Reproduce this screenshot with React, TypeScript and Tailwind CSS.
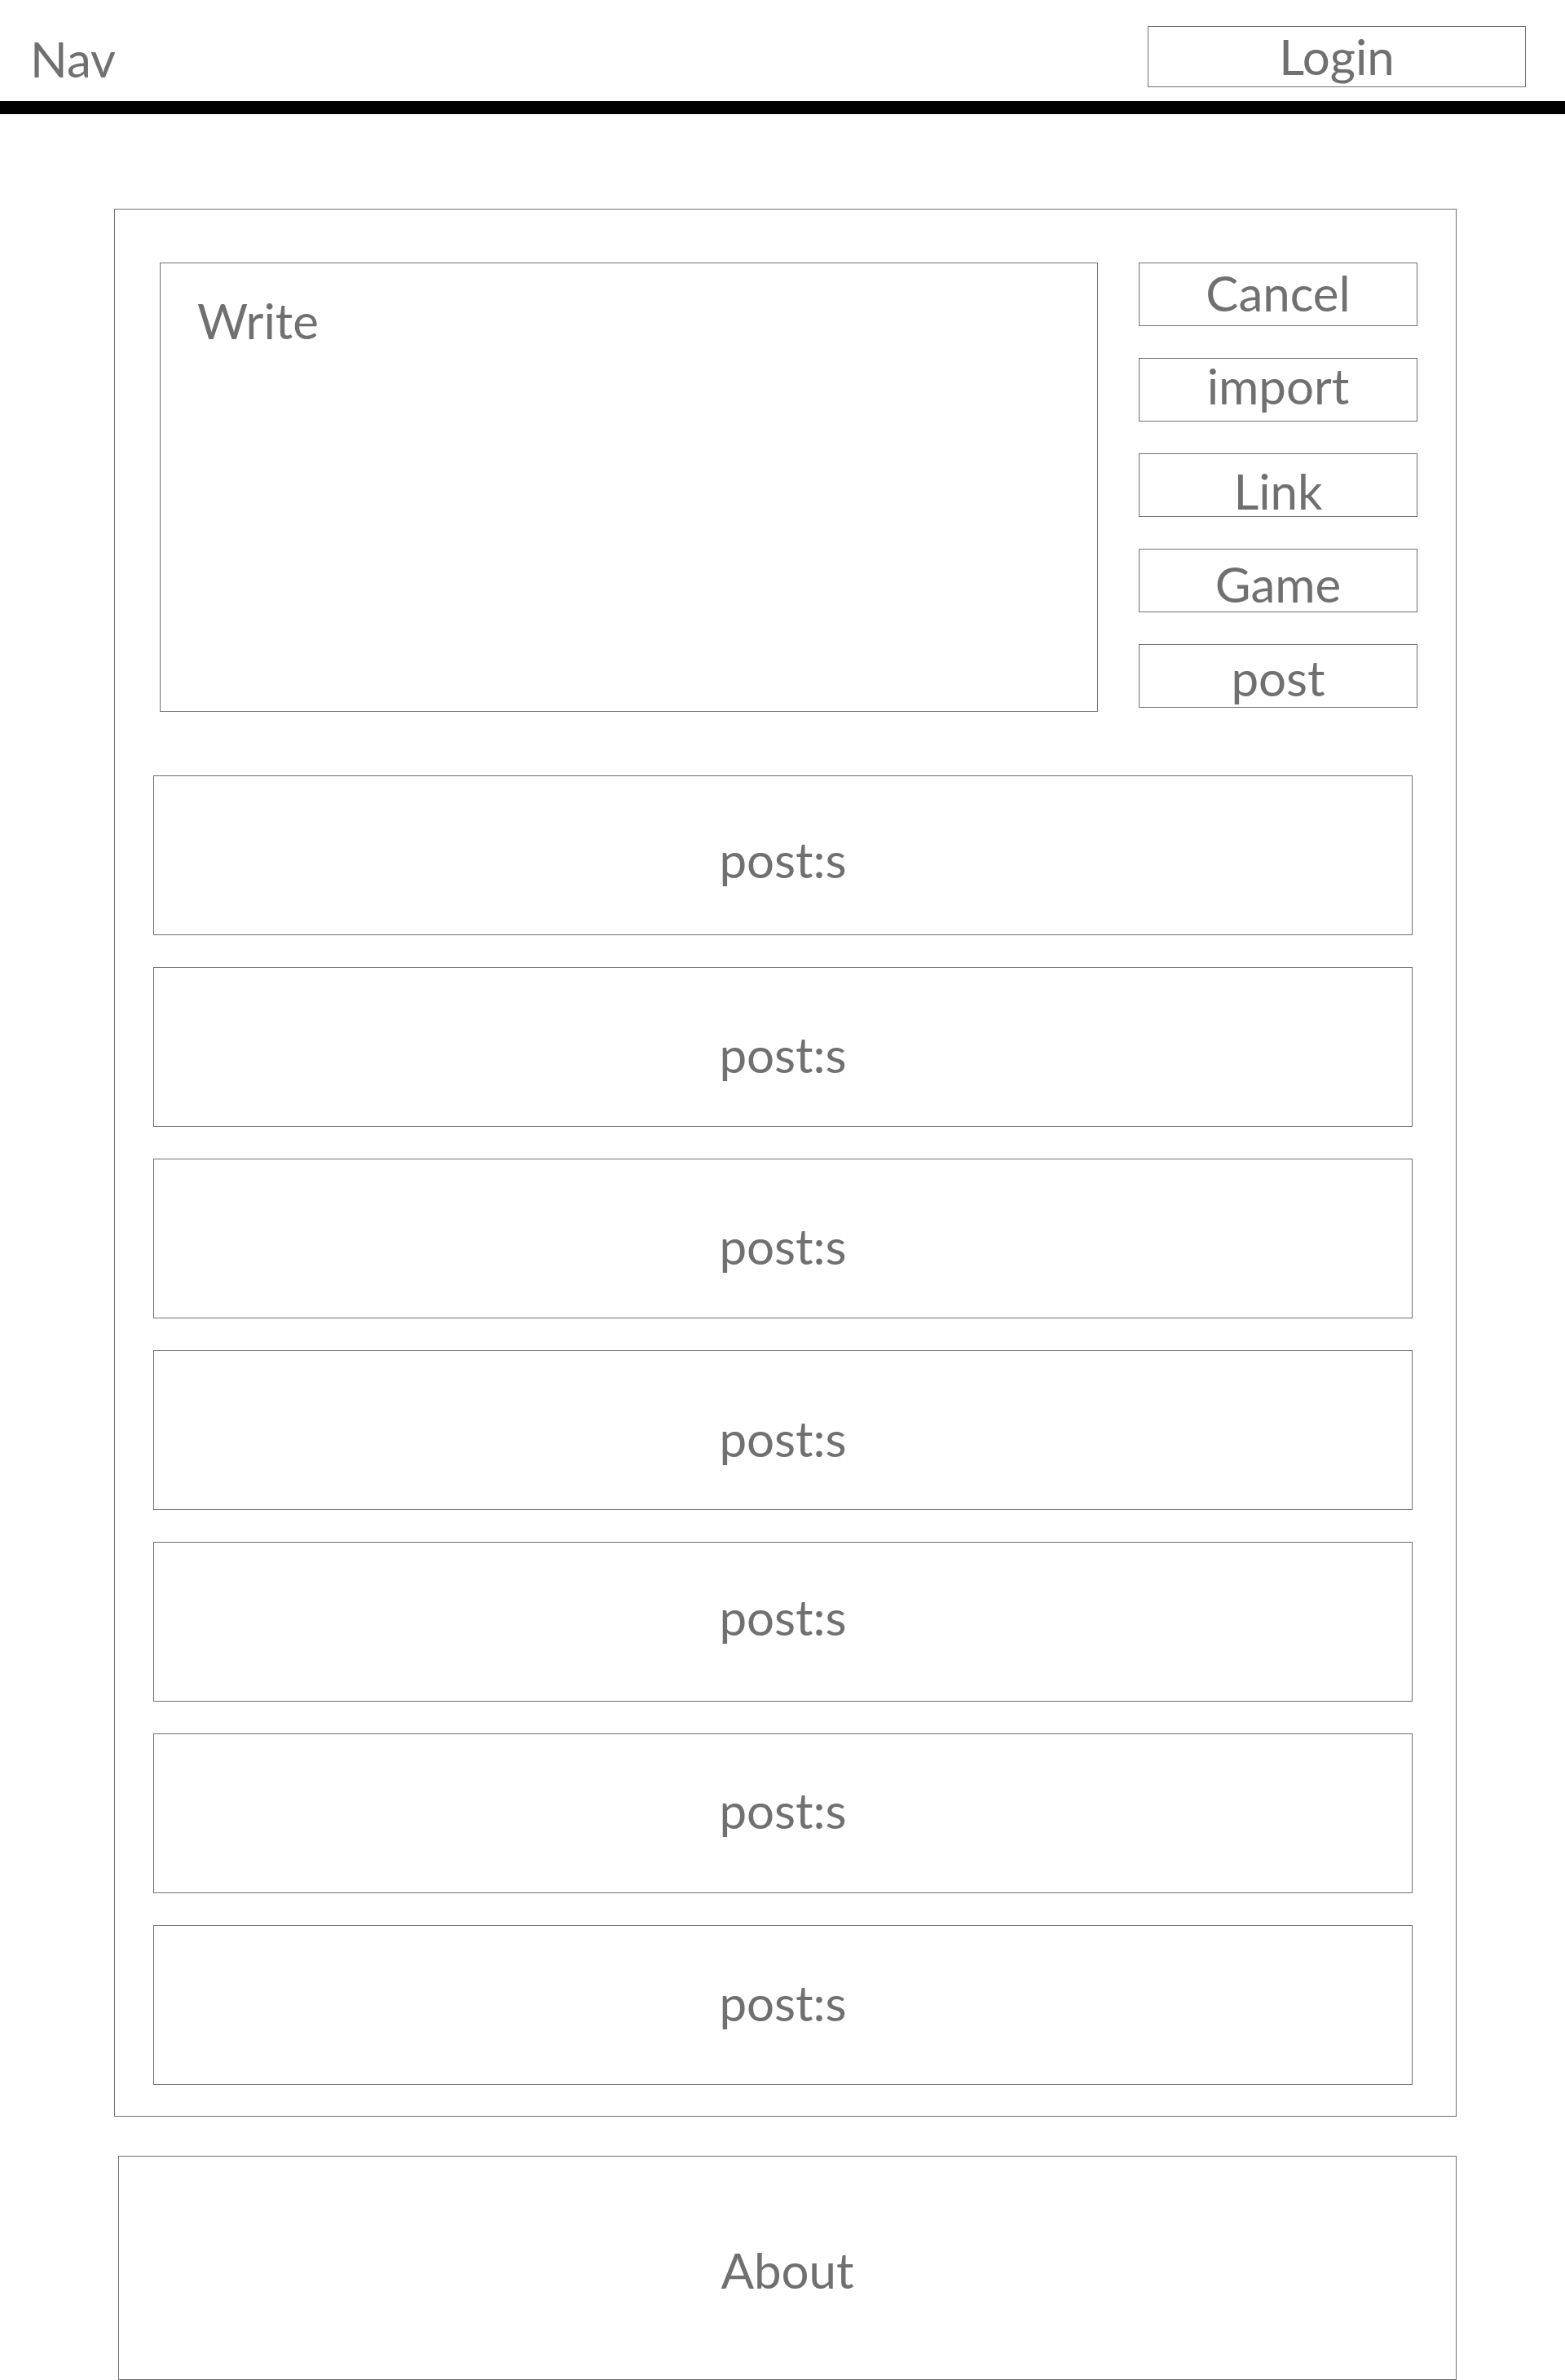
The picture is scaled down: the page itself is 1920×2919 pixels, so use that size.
import React from "react";

const posts = [
  "pt-[10px]",
  "pt-[18px]",
  "pt-[18px]",
  "pt-[20px]",
  "pb-[12px]",
  "pb-[8px]",
  "pb-[6px]",
];
const buttons: [string, string][] = [
  ["Cancel", "pb-[4px]"],
  ["import", "pb-[10px]"],
  ["Link", "pt-[14px]"],
  ["Game", "pt-[8px]"],
  ["post", "pt-[4px]"],
];

export default function App() {
  return (
    <div className="w-[1920px] min-h-[2919px] bg-white font-['Lato',sans-serif] text-[#707070]">
      <header className="h-[124px] flex items-start justify-between pl-[37px] pr-[48px] pt-[32px]">
        <div className="text-[60px] leading-[74px] pt-[3px]">Nav</div>
        <div className="w-[464px] h-[75px] border border-[#707070] text-center text-[60px] leading-[73px]">
          Login
        </div>
      </header>
      <div className="h-[16px] bg-black" />
      <main className="ml-[140px] mt-[116px] w-[1647px] border border-[#707070] pt-[65px] pb-[38px]">
        <div className="flex pl-[55px]">
          <div className="w-[1151px] h-[551px] border border-[#707070] pl-[45px] pt-[34px] text-[60px] leading-[72px]">
            Write
          </div>
          <div className="ml-[50px] w-[342px] flex flex-col gap-[39px]">
            {buttons.map(([b, cls]) => (
              <div
                key={b}
                className={
                  "h-[78px] border border-[#707070] flex items-center justify-center text-[60px] leading-[60px] " +
                  cls
                }
              >
                {b}
              </div>
            ))}
          </div>
        </div>
        <div className="mt-[78px] ml-[47px] w-[1545px] flex flex-col gap-[39px]">
          {posts.map((cls, i) => (
            <div
              key={i}
              className={
                "h-[196px] border border-[#707070] flex items-center justify-center text-[60px] leading-[72px] " +
                cls
              }
            >
              post:s
            </div>
          ))}
        </div>
      </main>
      <footer className="ml-[145px] mt-[48px] w-[1642px] h-[275px] border border-[#707070] flex items-center justify-center text-[60px] leading-[72px] pt-[4px]">
        About
      </footer>
    </div>
  );
}
